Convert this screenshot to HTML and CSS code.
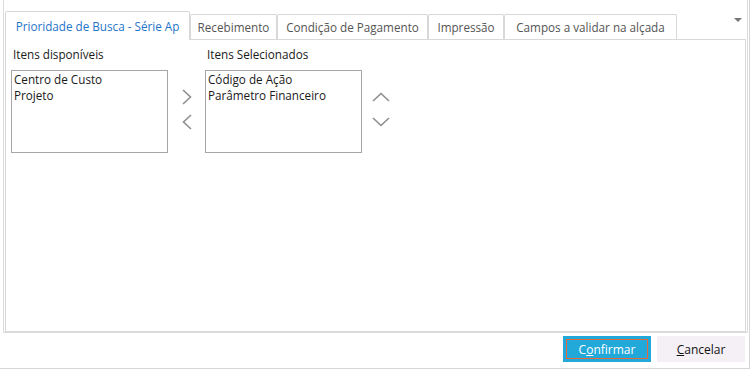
FILE: index.html
```html
<!DOCTYPE html>
<html lang="pt-BR">
<head>
  <meta charset="UTF-8" />
  <title>Parâmetros</title>
  <link rel="stylesheet" href="styles.css">
</head>
<body>
  <div class="window">
    <div class="tab-control">
      <div class="tab-bar">
        <div class="tab active" style="width: 185px">Prioridade de Busca - Série Ap</div>
        <div class="tab" style="width: 87px">Recebimento</div>
        <div class="tab" style="width: 151px">Condição de Pagamento</div>
        <div class="tab" style="width: 76px">Impressão</div>
        <div class="tab" style="width: 173px">Campos a validar na alçada</div>
        <div class="tab-menu"></div>
      </div>

      <div class="tab-panel">
        <div class="picker">
          <div class="column">
            <label class="list-label">Itens disponíveis</label>
            <div class="listbox">
              <div class="item">Centro de Custo</div>
              <div class="item">Projeto</div>
            </div>
          </div>

          <div class="move-buttons">
            <svg width="12" height="16" viewBox="0 0 12 16"><path d="M2 1 L9.5 8 L2 15" /></svg>
            <svg width="12" height="16" viewBox="0 0 12 16"><path d="M10 1 L2.5 8 L10 15" /></svg>
          </div>

          <div class="column">
            <label class="list-label">Itens Selecionados</label>
            <div class="listbox">
              <div class="item">Código de Ação</div>
              <div class="item">Parâmetro Financeiro</div>
            </div>
          </div>

          <div class="order-buttons">
            <svg width="18" height="10" viewBox="0 0 18 10"><path d="M1 9 L9 1.5 L17 9" /></svg>
            <svg width="18" height="10" viewBox="0 0 18 10"><path d="M1 1 L9 8.5 L17 1" /></svg>
          </div>
        </div>
      </div>
    </div>

    <div class="footer">
      <button class="btn primary">
        <span class="focus-ring"></span>
        C<u>o</u>nfirmar
      </button>
      <button class="btn"><u>C</u>ancelar</button>
    </div>
  </div>
</body>
</html>
```

FILE: styles.css
```css
body {
  margin: 0;
  background-color: #fff;
  color: #1a1a1a;
  font-family: 'Open Sans', 'Noto Sans', sans-serif;
  font-size: 11.7px;
}

.window {
  width: 749px;
  height: 368px;
  border-right: 1px solid #d6d6d6;
  border-bottom: 1px solid #d6d6d6;
}

.tab-control {
  margin-left: 3px;
  width: 745px;
  height: 333px;
  box-sizing: border-box;
  padding: 11px 1px 1px 1px;
  border-left: 1px solid #dcdcdc;
  border-right: 1px solid #dcdcdc;
  border-bottom: 1px solid #dcdcdc;
}

.tab-bar {
  display: flex;
  align-items: flex-end;
  height: 28px;
}

.tab {
  box-sizing: border-box;
  height: 25px;
  line-height: 24px;
  text-align: center;
  color: #555;
  border: 1px solid #d8d8d8;
  border-bottom: none;
  border-radius: 2px 2px 0 0;
  white-space: nowrap;
}

.tab.active {
  position: relative;
  height: 29px;
  line-height: 29px;
  margin-bottom: -1px;
  background-color: #fff;
  color: #1f74c8;
  z-index: 1;
}

.tab-menu {
  margin-left: auto;
  margin-right: 4px;
  align-self: flex-start;
  margin-top: 7px;
  width: 0;
  height: 0;
  border-left: 4px solid transparent;
  border-right: 4px solid transparent;
  border-top: 4px solid #767676;
}

.tab-panel {
  box-sizing: border-box;
  height: 293px;
  border: 1px solid #d8d8d8;
  padding: 5px 0 0 5px;
}

.picker {
  display: flex;
}

.column {
  display: flex;
  flex-direction: column;
}

.list-label {
  display: block;
  margin-left: 2px;
  height: 25px;
  line-height: 19px;
}

.listbox {
  box-sizing: border-box;
  width: 157px;
  height: 83px;
  border: 1px solid #a6a6a6;
  padding: 0 2px;
}

.item {
  line-height: 16px;
  white-space: nowrap;
}

.move-buttons {
  width: 37px;
  display: flex;
  flex-direction: column;
  align-items: center;
  gap: 9px;
  padding-top: 44px;
}

.order-buttons {
  width: 38px;
  display: flex;
  flex-direction: column;
  align-items: center;
  gap: 15px;
  padding-top: 47px;
}

.move-buttons svg path,
.order-buttons svg path {
  fill: none;
  stroke: #8e8e8e;
  stroke-width: 1.6;
}

.footer {
  display: flex;
  justify-content: flex-end;
  gap: 6px;
  padding: 3px 4px 0 0;
}

.btn {
  width: 88px;
  height: 26px;
  border: none;
  padding: 0;
  font-family: inherit;
  font-size: 12px;
  color: #111;
  background-color: #f5f0f5;
}

.btn.primary {
  position: relative;
  background-color: #22a8d9;
  color: #fff;
}

.focus-ring {
  position: absolute;
  left: 3px;
  top: 3px;
  right: 3px;
  bottom: 3px;
  border: 1px solid #e46a3c;
}
```
